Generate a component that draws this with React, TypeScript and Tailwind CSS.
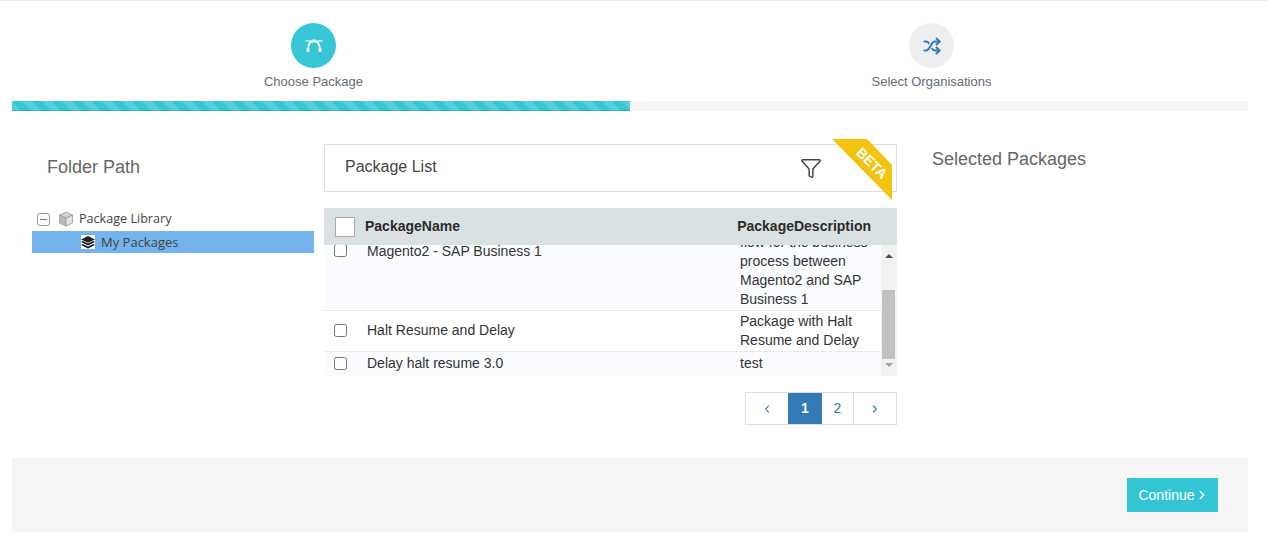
import React from 'react';
import { ChevronLeft, ChevronRight, Funnel, Shuffle } from 'lucide-react';

const PenCurveIcon = () => (
  <svg viewBox="0 0 18 13" className="w-[18px] h-[13px]" fill="none" stroke="#fff">
    <path d="M3 10 C3 5 6 2 9 2 C12 2 15 5 15 10" strokeWidth="1.7" />
    <path d="M0.5 2h17" strokeWidth="1.2" />
    <rect x="7.5" y="0.5" width="3" height="3" fill="#fff" stroke="none" />
    <rect x="1.5" y="9" width="3" height="4" rx="1" fill="#fff" stroke="none" />
    <rect x="13.5" y="9" width="3" height="4" rx="1" fill="#fff" stroke="none" />
  </svg>
);

const CubeIcon = () => (
  <svg viewBox="0 0 16 16" className="w-4 h-4">
    <path d="M8 1l6.5 3L8 7 1.5 4z" fill="#d5d5d5" stroke="#999" strokeWidth="0.8" />
    <path d="M1.5 4L8 7v8l-6.5-3z" fill="#bbb" stroke="#999" strokeWidth="0.8" />
    <path d="M14.5 4L8 7v8l6.5-3z" fill="#e2e2e2" stroke="#999" strokeWidth="0.8" />
  </svg>
);

const StackIcon = () => (
  <svg viewBox="0 0 14 14" className="w-[14px] h-[14px]">
    <path d="M7 1l7 3.4-7 3.4-7-3.4z" fill="#222" />
    <path d="M1.8 6L0 7l7 3.4L14 7l-1.8-1L7 8.6z" fill="#222" />
    <path d="M1.8 9L0 10l7 3.4 7-3.4-1.8-1L7 11.6z" fill="#222" />
  </svg>
);

const Step = ({ label, active, icon }: { label: string; active?: boolean; icon: React.ReactNode }) => (
  <div className="flex-1 flex flex-col items-center pr-[15px]">
    <div className={`w-[45px] h-[45px] rounded-full flex items-center justify-center ${active ? 'bg-[#37c6d5]' : 'bg-[#eeeeee]'}`}>
      {icon}
    </div>
    <div className="mt-[5px] text-[13px] leading-[18px] text-[#666b75]">{label}</div>
  </div>
);

const rows = [
  { name: 'Halt Resume and Delay', desc: ['Package with Halt', 'Resume and Delay'], h: 'h-[41px]', bg: 'bg-white', nudge: 'pb-[2px]' },
  { name: 'Delay halt resume 3.0', desc: ['test'], h: 'h-[24px] pb-[2px]', bg: 'bg-[#fafcff]', nudge: '' },
];

export default function App() {
  return (
    <div className="w-[1267px] h-[547px] bg-white border-t border-[#e7ebef] font-['Liberation_Sans',Arial,sans-serif] text-[#333] overflow-hidden">
      <div className="pl-3 pr-[19px]">
        {/* Wizard steps */}
        <div className="flex pt-[22px] h-[100px]">
          <Step label="Choose Package" active icon={<PenCurveIcon />} />
          <Step label="Select Organisations" icon={<Shuffle className="w-[18px] h-[18px] text-[#337ab7]" strokeWidth={2.8} />} />
        </div>
        <div className="h-[10px] bg-[#f5f5f5]">
          <div className="h-full w-1/2 bg-[repeating-linear-gradient(45deg,#56cfdc_0,#56cfdc_7.07px,#37c6d5_7.07px,#37c6d5_14.14px)] shadow-[inset_0_-1px_0_rgba(0,0,0,0.15)]" />
        </div>

        <div className="flex mt-[33px] h-[300px]">
          {/* Folder tree */}
          <div className="w-[312px] pl-5 pr-[10px] shrink-0">
            <div className="pl-[15px] pt-[13px] text-[18px] leading-[21px] text-[#666]">Folder Path</div>
            <div className="mt-[29px] text-[12.6px] font-['Open_Sans',sans-serif] text-[#444]">
              <div className="flex items-center h-6 pl-[5px]">
                <span className="w-[13px] h-[13px] rounded-[3px] border border-[#999] flex items-center justify-center">
                  <span className="w-[7px] h-px bg-[#777]" />
                </span>
                <span className="ml-2"><CubeIcon /></span>
                <span className="ml-[5px]">Package Library</span>
              </div>
              <div className="flex items-center h-[22px] bg-[#74b3ec] pl-[49px] text-[13px]">
                <span className="bg-white"><StackIcon /></span>
                <span className="ml-[6px] pt-[2px]">My Packages</span>
              </div>
            </div>
          </div>

          {/* Package list */}
          <div className="w-[573px] shrink-0">
            <div className="relative h-12 border border-[#dddddd] flex items-center justify-between pl-5 pr-[74px]">
              <span className="text-[16px] text-[#444] pb-[2px]">Package List</span>
              <Funnel className="w-[22px] h-[22px] text-[#444]" strokeWidth={1.6} />
              <svg viewBox="0 0 60 61" className="absolute -top-[6px] right-[4px] w-[60px] h-[61px]">
                <polygon points="0,0 35,0 60,26 60,61" fill="#f2c40f" />
                <text x="40" y="29" fill="#fff" fontSize="14" fontWeight="700" textAnchor="middle" transform="rotate(45 40 24)">BETA</text>
              </svg>
            </div>

            <div className="mt-4 h-[37px] bg-[#d9e1e3] flex items-center text-[14px] font-bold text-[#2b2b2b]">
              <span className="ml-[11px] w-5 h-5 bg-white border border-[#aaa]" />
              <span className="ml-[10px]">PackageName</span>
              <span className="ml-auto mr-[26px]">PackageDescription</span>
            </div>

            <div className="flex h-[131px] text-[14px] leading-[19px]">
              <div className="w-[557px] overflow-hidden">
                {/* list is scrolled, so the first row is cut off at the top */}
                <div className="-mt-[7px] h-[73px] bg-[#fafcff] border-b border-[#e6ebf0] flex">
                  <div className="w-[43px] pl-[10px] pt-[6px] shrink-0"><input type="checkbox" className="block" /></div>
                  <div className="w-[373px] pt-[4px] shrink-0">Magento2 - SAP Business 1</div>
                  <div className="-mt-[5px]">flow for the business<br />process between<br />Magento2 and SAP<br />Business 1</div>
                </div>
                {rows.map((r) => (
                  <div key={r.name} className={`${r.h} ${r.bg} border-b border-[#e6ebf0] last:border-b-0 flex items-center`}>
                    <div className={`w-[43px] pl-[10px] shrink-0 ${r.nudge}`}><input type="checkbox" className="block" /></div>
                    <div className={`w-[373px] shrink-0 ${r.nudge}`}>{r.name}</div>
                    <div>{r.desc.map((d) => <div key={d}>{d}</div>)}</div>
                  </div>
                ))}
              </div>
              {/* scrollbar */}
              <div className="w-4 bg-[#f1f1f1] flex flex-col items-center pt-[9px] pr-px">
                <span className="w-0 h-0 border-x-[4px] border-x-transparent border-b-[4px] border-b-[#505050]" />
                <span className="mt-[32px] w-[13px] h-[69px] bg-[#c1c1c1]" />
                <span className="mt-[4px] w-0 h-0 border-x-[4px] border-x-transparent border-t-[4px] border-t-[#a3a3a3]" />
              </div>
            </div>

            <div className="mt-4 flex justify-end">
              <div className="flex h-[33px] border border-[#dddddd] text-[14px] text-[#337ab7] items-stretch">
                <span className="w-[42px] flex items-center justify-center"><ChevronLeft className="w-3 h-3 text-[#5a8ab5]" strokeWidth={2.4} /></span>
                <span className="w-[34px] bg-[#337ab7] text-white font-bold flex items-center justify-center">1</span>
                <span className="w-8 flex items-center justify-center border-r border-[#dddddd]">2</span>
                <span className="w-[42px] flex items-center justify-center"><ChevronRight className="w-3 h-3" strokeWidth={2.4} /></span>
              </div>
            </div>
          </div>

          {/* Selected packages */}
          <div className="pl-[35px] pt-[5px] text-[18px] leading-[21px] text-[#666]">Selected Packages</div>
        </div>

        <div className="mt-[14px] h-[74px] bg-[#f6f6f6] flex items-center justify-end pr-[30px]">
          <button className="w-[91px] h-[34px] bg-[#33c5d3] text-white text-[14px] flex items-center justify-center pl-[2px]">
            Continue<ChevronRight className="w-[14px] h-[14px]" strokeWidth={2.4} />
          </button>
        </div>
      </div>
    </div>
  );
}
